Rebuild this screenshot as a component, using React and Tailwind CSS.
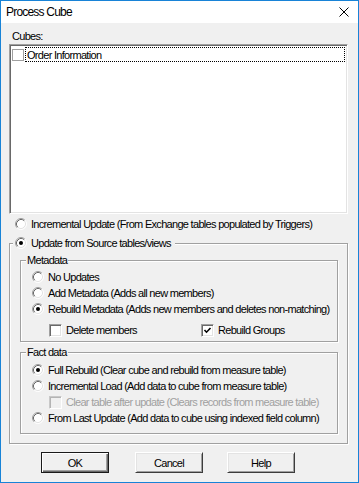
import React from 'react';

// Classic sunken radio button
const Radio = ({ checked }) => (
  <svg width="12" height="12" viewBox="0 0 12 12" className="shrink-0">
    <circle cx="6" cy="6" r="5" fill="#fff" />
    <path d="M2.11 9.89A5.5 5.5 0 0 1 9.89 2.11" fill="none" stroke="#a0a0a0" />
    <path d="M9.89 2.11A5.5 5.5 0 0 1 2.11 9.89" fill="none" stroke="#fff" />
    <path d="M2.82 9.18A4.5 4.5 0 0 1 9.18 2.82" fill="none" stroke="#696969" />
    <path d="M9.18 2.82A4.5 4.5 0 0 1 2.82 9.18" fill="none" stroke="#e3e3e3" />
    {checked && <circle cx="6" cy="6" r="2" fill="#000" />}
  </svg>
);

const CheckBox = ({ checked, disabled }) => (
  <span
    className={
      disabled
        ? 'w-[13px] h-[13px] shrink-0 bg-[#f0f0f0] border border-t-[#c8c8c8] border-l-[#c8c8c8] border-r-white border-b-white shadow-[inset_1px_1px_0_#b4b4b4]'
        : 'w-[13px] h-[13px] shrink-0 flex items-center justify-center bg-white border border-t-[#a0a0a0] border-l-[#a0a0a0] border-r-white border-b-white shadow-[inset_1px_1px_0_#696969,inset_-1px_-1px_0_#e3e3e3]'
    }
  >
    {checked && (
      <svg width="9" height="9" viewBox="0 0 9 9">
        <polyline points="1.5,4 3.5,6.2 7.5,2" fill="none" stroke="#000" strokeWidth="1.6" />
      </svg>
    )}
  </span>
);

const RadioRow = ({ checked, children }) => (
  <div className="flex items-center h-[16px] pl-[11px] gap-[4px] whitespace-nowrap">
    <Radio checked={checked} />
    <span>{children}</span>
  </div>
);

const Button = ({ isDefault, children, className }) => (
  <button
    className={
      (isDefault
        ? 'border border-[#1a1a1a] shadow-[inset_1px_1px_0_#fff,inset_-1px_-1px_0_#696969,inset_-2px_-2px_0_#a0a0a0] '
        : 'border border-t-white border-l-white border-r-[#3c3c3c] border-b-[#3c3c3c] shadow-[inset_1px_1px_0_#e3e3e3,inset_-1px_-1px_0_#a0a0a0] ') +
      'w-[68px] h-[21px] bg-[#f0f0f0] text-black flex items-center justify-center ' +
      className
    }
  >
    {children}
  </button>
);

const App = () => {
  return (
    <div className="w-[359px] h-[483px] border border-[#1883d7] bg-[#f0f0f0] flex flex-col font-['Liberation_Sans',Arial,sans-serif] text-[11px] leading-[14px] tracking-[-0.7px] text-black">
      {/* Title bar */}
      <div className="h-[22px] bg-white flex items-center justify-between pl-[5px] pr-[9px] shrink-0">
        <span className="text-[12px] tracking-[-0.8px]">Process Cube</span>
        <svg width="10" height="10" viewBox="0 0 10 10">
          <path d="M0.5 0.5L9.5 9.5M9.5 0.5L0.5 9.5" stroke="#000" strokeWidth="1" />
        </svg>
      </div>

      <div className="pl-[8px] flex flex-col">
        <div className="mt-[7px] ml-[3px] leading-[13px]">Cubes:</div>

        {/* Cube list */}
        <div className="mt-[1px] w-[339px] h-[170px] bg-white border border-t-[#a0a0a0] border-l-[#a0a0a0] border-r-white border-b-white shadow-[inset_1px_1px_0_#696969,inset_-1px_-1px_0_#e3e3e3] p-[1px]">
          <div className="flex items-center mt-[1px] pr-[1px]">
            <span className="w-[12px] h-[12px] ml-[1px] shrink-0 bg-white border border-[#a0a0a0]" />
            <div className="flex-1 ml-[1px] h-[15px] border border-dotted border-black flex items-center pl-[1px]">
              Order Information
            </div>
          </div>
        </div>

        <div className="mt-[3px] flex items-center h-[14px] pl-[6px] gap-[4px] whitespace-nowrap">
          <Radio />
          <span>Incremental Update (From Exchange tables populated by Triggers)</span>
        </div>

        {/* Update from source */}
        <fieldset className="mt-[5px] w-[339px] border border-[#a0a0a0] shadow-[inset_1px_1px_0_#fff,1px_1px_0_#fff] pb-[9px]">
          <legend className="ml-[3px] pl-[2px] pr-[4px] bg-[#f0f0f0]">
            <span className="flex items-center h-[14px] gap-[4px] whitespace-nowrap">
              <Radio checked />
              <span>Update from Source tables/views</span>
            </span>
          </legend>

          <fieldset className="mt-[3px] ml-[10px] mr-[9px] border border-[#a0a0a0] shadow-[inset_1px_1px_0_#fff,1px_1px_0_#fff] pt-[2px] pb-[3px]">
            <legend className="ml-[5px] px-[1px] bg-[#f0f0f0]">Metadata</legend>
            <RadioRow>No Updates</RadioRow>
            <RadioRow>Add Metadata (Adds all new members)</RadioRow>
            <RadioRow checked>Rebuild Metadata (Adds new members and deletes non-matching)</RadioRow>
            <div className="mt-[5px] flex items-center h-[16px] pl-[28px]">
              <div className="w-[152px] flex items-center gap-[4px]">
                <CheckBox />
                <span>Delete members</span>
              </div>
              <div className="flex items-center gap-[4px]">
                <CheckBox checked />
                <span>Rebuild Groups</span>
              </div>
            </div>
          </fieldset>

          <fieldset className="mt-[3px] ml-[10px] mr-[9px] border border-[#a0a0a0] shadow-[inset_1px_1px_0_#fff,1px_1px_0_#fff] pt-[3px] pb-[7px]">
            <legend className="ml-[5px] px-[1px] bg-[#f0f0f0]">Fact data</legend>
            <RadioRow checked>Full Rebuild (Clear cube and rebuild from measure table)</RadioRow>
            <RadioRow>Incremental Load (Add data to cube from measure table)</RadioRow>
            <div className="flex items-center h-[16px] pl-[28px] gap-[4px] whitespace-nowrap text-[#a0a0a0]">
              <CheckBox disabled />
              <span>Clear table after update (Clears records from measure table)</span>
            </div>
            <RadioRow>From Last Update (Add data to cube using indexed field column)</RadioRow>
          </fieldset>
        </fieldset>

        <div className="mt-[8px] flex">
          <Button isDefault className="ml-[32px]">OK</Button>
          <Button className="ml-[26px]">Cancel</Button>
          <Button className="ml-[24px]">Help</Button>
        </div>
      </div>
    </div>
  );
};

export default App;
